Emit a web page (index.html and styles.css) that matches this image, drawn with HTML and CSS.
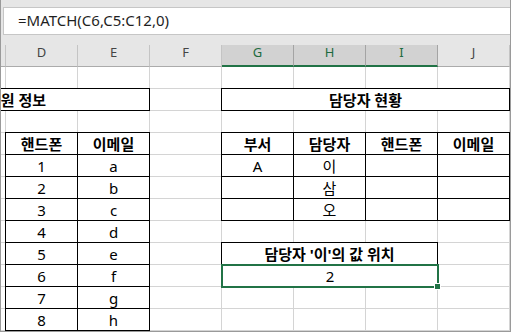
FILE: index.html
```html
<!DOCTYPE html>
<html lang="ko">
<head>
    <meta charset="UTF-8">
    <meta name="viewport" content="width=device-width, initial-scale=1.0">
    <title>담당자 현황</title>
    <link rel="stylesheet" href="styles.css">
</head>
<body>
    <div class="app">
        <div class="formula-bar">
            <div class="formula-input">=MATCH(C6,C5:C12,0)</div>
        </div>

        <!-- column letters, scrolled so that D starts near the left edge -->
        <div class="grid-cols col-heads">
            <div class="col-head"></div>
            <div class="col-head"></div>
            <div class="col-head">D</div>
            <div class="col-head">E</div>
            <div class="col-head">F</div>
            <div class="col-head on">G</div>
            <div class="col-head on">H</div>
            <div class="col-head on">I</div>
            <div class="col-head">J</div>
        </div>

        <div class="sheet">
            <div class="rows">
                <div class="grid-cols row"></div>
                <div class="grid-cols row">
                    <div class="cell box head span-be">사원 정보</div>
                    <div class="cell box head span-gj">담당자 현황</div>
                </div>
                <div class="grid-cols row"></div>
                <div class="grid-cols row">
                    <div class="cell box head c-d">핸드폰</div>
                    <div class="cell box head c-e">이메일</div>
                    <div class="cell box head c-g">부서</div>
                    <div class="cell box head c-h">담당자</div>
                    <div class="cell box head c-i">핸드폰</div>
                    <div class="cell box head c-j">이메일</div>
                </div>
                <div class="grid-cols row">
                    <div class="cell box c-d">1</div>
                    <div class="cell box c-e">a</div>
                    <div class="cell box c-g">A</div>
                    <div class="cell box c-h">이</div>
                    <div class="cell box c-i"></div>
                    <div class="cell box c-j"></div>
                </div>
                <div class="grid-cols row">
                    <div class="cell box c-d">2</div>
                    <div class="cell box c-e">b</div>
                    <div class="cell box c-g"></div>
                    <div class="cell box c-h">삼</div>
                    <div class="cell box c-i"></div>
                    <div class="cell box c-j"></div>
                </div>
                <div class="grid-cols row">
                    <div class="cell box c-d">3</div>
                    <div class="cell box c-e">c</div>
                    <div class="cell box c-g"></div>
                    <div class="cell box c-h">오</div>
                    <div class="cell box c-i"></div>
                    <div class="cell box c-j"></div>
                </div>
                <div class="grid-cols row">
                    <div class="cell box c-d">4</div>
                    <div class="cell box c-e">d</div>
                </div>
                <div class="grid-cols row">
                    <div class="cell box c-d">5</div>
                    <div class="cell box c-e">e</div>
                    <div class="cell box head span-gi">담당자 '이'의 값 위치</div>
                </div>
                <div class="grid-cols row">
                    <div class="cell box c-d">6</div>
                    <div class="cell box c-e">f</div>
                    <div class="cell sel span-gi">2<span class="handle"></span></div>
                </div>
                <div class="grid-cols row">
                    <div class="cell box c-d">7</div>
                    <div class="cell box c-e">g</div>
                </div>
                <div class="grid-cols row">
                    <div class="cell box c-d">8</div>
                    <div class="cell box c-e">h</div>
                </div>
            </div>
        </div>
    </div>
</body>
</html>
```

FILE: styles.css
```css
* { box-sizing: border-box; }
body { margin: 0; background: #e6e6e6; font-family: "Noto Sans", "Noto Sans CJK KR", sans-serif; color: #000; }

.app { width: 511px; height: 332px; overflow: hidden; border: 1px solid #9a9a9a; border-top: 0; }

/* formula bar */
.formula-bar { padding: 7px 0 10px 2px; }
.formula-input { height: 28px; background: #fff; border: 1px solid #c6c6c6; border-right: 0; padding-left: 14px; font-size: 15px; line-height: 24px; color: #1f1f1f; }

/* shared column template: B (partly scrolled away), C .. J */
.grid-cols { display: grid; grid-template-columns: 50px repeat(8, 72px); margin-left: -117px; }

/* column letters */
.col-head { height: 22px; border-right: 1px solid #c4c4c4; border-bottom: 1px solid #ababab; text-align: center; font-size: 13px; line-height: 15px; color: #444; }
.col-head.on { background: #d2d2d2; border-right-color: #a4a4a4; border-bottom: 2px solid #217346; color: #1d6b40; }

/* cell area with gridlines */
.sheet {
    height: 264px;
    background-color: #fff;
    background-image: linear-gradient(to right, transparent 71px, #d4d4d4 71px), linear-gradient(to bottom, transparent 21px, #d4d4d4 21px);
    background-size: 72px 100%, 100% 22px;
    background-position: 5px 0, 0 0;
}
.row { height: 22px; grid-template-rows: 22px; }

.cell { display: flex; align-items: center; justify-content: center; font-size: 15px; line-height: 20px; white-space: nowrap; }
.box { background: #fff; border: 1px solid #000; margin: -1px 0 0 -1px; }
.head { font-weight: bold; }

.c-d { grid-column: 3; }
.c-e { grid-column: 4; }
.c-g { grid-column: 6; }
.c-h { grid-column: 7; }
.c-i { grid-column: 8; }
.c-j { grid-column: 9; }
.span-be { grid-column: 1 / 5; }
.span-gj { grid-column: 6 / 10; }
.span-gi { grid-column: 6 / 9; }

/* active cell */
.sel { position: relative; background: #fff; border: 2px solid #217346; margin: -1px; }
.handle { position: absolute; right: -4px; bottom: -4px; width: 7px; height: 7px; background: #217346; border: 1px solid #fff; }
```
